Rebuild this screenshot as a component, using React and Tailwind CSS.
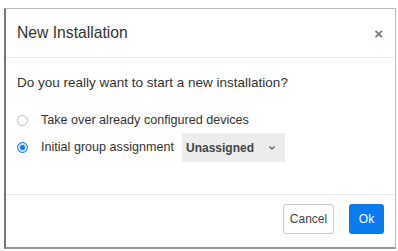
import React, { useState } from 'react';

function App() {
  const [mode, setMode] = useState('group');

  return (
    <div className="w-[398px] h-[251px] bg-white pl-[4px] pt-[8px] pr-[2px] pb-[2px] font-['Liberation_Sans',Arial,sans-serif]">
      <div className="w-[392px] h-[241px] bg-white border border-[#bbb] border-l-[2px] border-l-[#777] border-b-[2px] border-b-[#999] flex flex-col">
        {/* header */}
        <div className="h-[49px] flex items-center justify-between pl-[11px] pr-[12px] border-b border-[#e8e8e8]">
          <h2 className="text-[15.7px] text-[#333] leading-none">New Installation</h2>
          <button className="text-[#777] text-[15px] font-bold leading-none">×</button>
        </div>

        {/* body */}
        <div className="h-[137px] pl-[11px] pt-[17px] border-b border-[#e8e8e8] text-[12.6px] text-[#333]">
          <p className="text-[13.5px] leading-[15px]">Do you really want to start a new installation?</p>

          <label className="flex items-center mt-[22px] h-[16px]" onClick={() => setMode('takeover')}>
            <span className={`w-[11px] h-[11px] rounded-full border flex items-center justify-center ${mode === 'takeover' ? 'border-[#1a73e8]' : 'border-[#bbb]'}`}>
              {mode === 'takeover' && <span className="w-[5px] h-[5px] rounded-full bg-[#1a73e8]" />}
            </span>
            <span className="ml-[13px]">Take over already configured devices</span>
          </label>

          <label className="flex items-center mt-[5px]" onClick={() => setMode('group')}>
            <span className={`w-[11px] h-[11px] rounded-full border flex items-center justify-center ${mode === 'group' ? 'border-[#1a73e8] bg-[#cfe0fb]' : 'border-[#bbb]'}`}>
              {mode === 'group' && <span className="w-[5px] h-[5px] rounded-full bg-[#1a73e8]" />}
            </span>
            <span className="ml-[13px]">Initial group assignment</span>
            <span className="ml-[8px] w-[103px] h-[29px] bg-[#ececec] flex items-center justify-between pl-[4px] pr-[9px]">
              <span className="font-bold text-[12px] text-[#444]">Unassigned</span>
              <svg width="8" height="6" viewBox="0 0 8 6">
                <path d="M1.5 1.5 L4 4 L6.5 1.5" stroke="#666" strokeWidth="1.5" fill="none" />
              </svg>
            </span>
          </label>
        </div>

        {/* footer */}
        <div className="flex-1 flex items-center justify-end gap-[15px] pr-[11px] pb-[4px]">
          <button className="w-[51px] h-[30px] border border-[#ccc] rounded-[3px] text-[12px] text-[#444] bg-white">Cancel</button>
          <button className="w-[35px] h-[30px] rounded-[3px] text-[12px] text-white bg-[#0b7bf0]">Ok</button>
        </div>
      </div>
    </div>
  );
}

export default App;
